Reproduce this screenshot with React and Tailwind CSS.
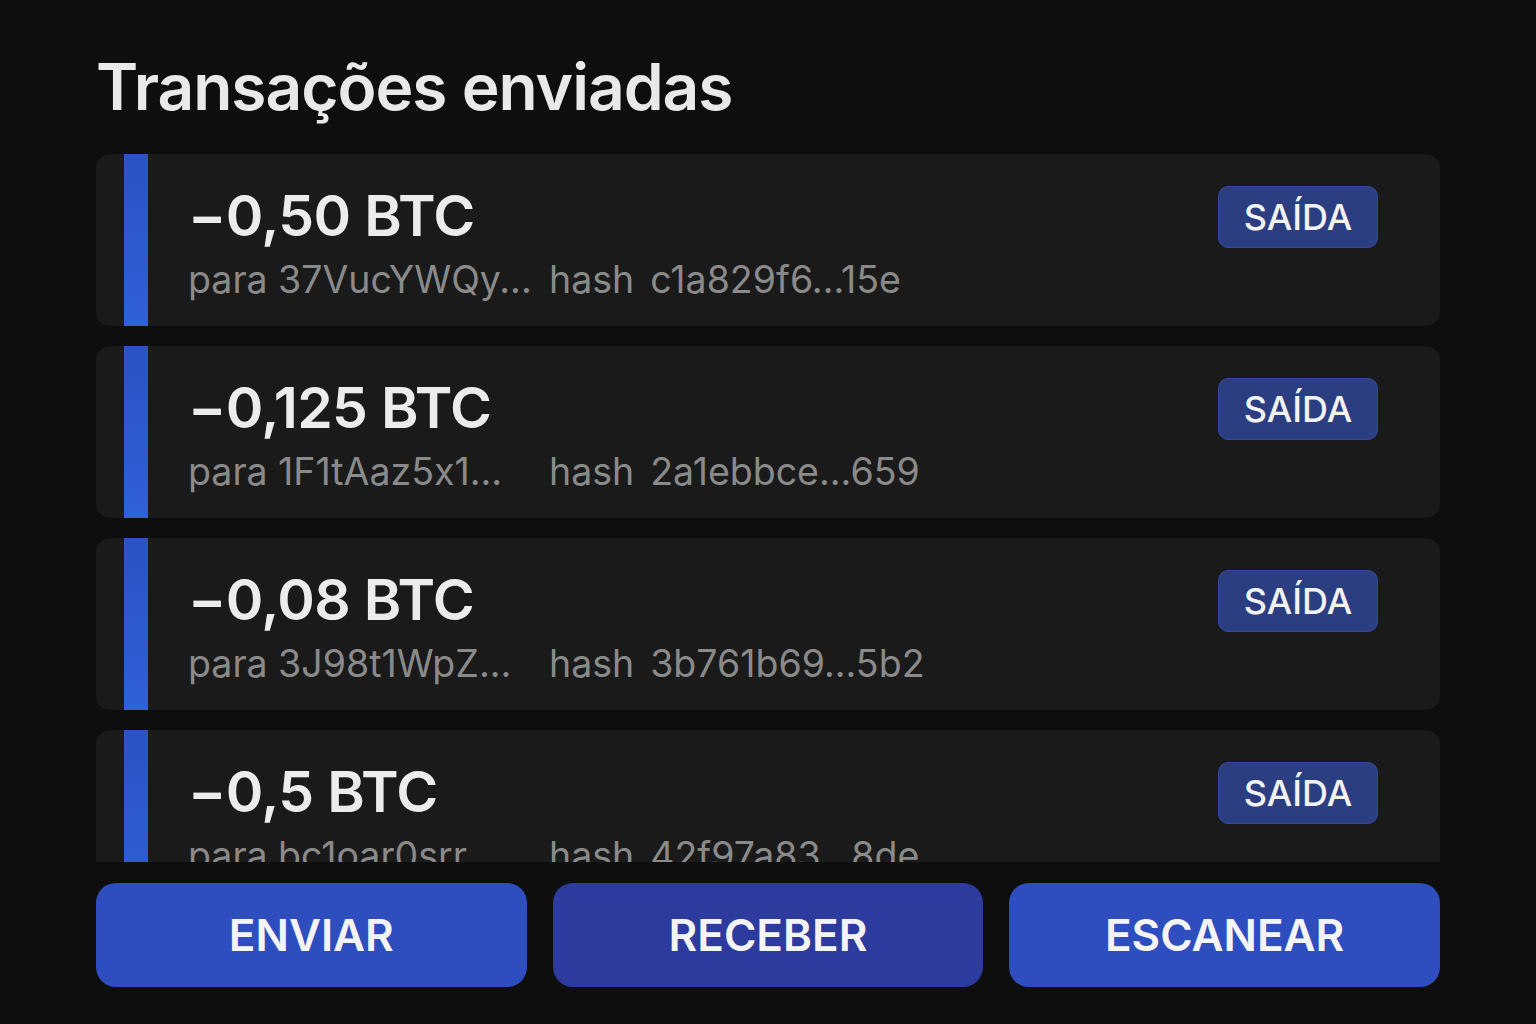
import React from "react";

const txs = [
  { amt: "−0,50 BTC", to: "para 37VucYWQy...", hash: "c1a829f6...15e" },
  { amt: "−0,125 BTC", to: "para 1F1tAaz5x1...", hash: "2a1ebbce...659" },
  { amt: "−0,08 BTC", to: "para 3J98t1WpZ...", hash: "3b761b69...5b2" },
  { amt: "−0,5 BTC", to: "para bc1oar0srr...", hash: "42f97a83...8de" },
];

function Row({ tx }) {
  return (
    <div className="flex h-[172px] shrink-0 rounded-[14px] bg-[#1a1a1a] pl-[28px] pr-[62px]">
      <div className="w-[24px] shrink-0 bg-gradient-to-b from-[#2c52c4] to-[#3160d8]" />
      <div className="flex flex-1 flex-col pl-[40px] pt-[33px]">
        <div className="text-[57px] font-semibold leading-none tracking-[-0.6px] text-[#ececec]">
          {tx.amt}
        </div>
        <div className="mt-[17px] flex text-[37.5px] leading-none text-[#8a8a8a] whitespace-nowrap">
          <span className="w-[361px] shrink-0">{tx.to}</span>
          <span>hash</span>
          <span className="ml-[16px]">{tx.hash}</span>
        </div>
      </div>
      <div className="pt-[32px]">
        <div className="flex h-[62px] w-[160px] items-center justify-center rounded-[10px] border border-[#34489a] bg-[#2b3e82] text-[36px] font-medium leading-none text-[#f2f2f2]">
          SAÍDA
        </div>
      </div>
    </div>
  );
}

export default function App() {
  return (
    <div
      className="h-[1024px] w-[1536px] overflow-hidden bg-[#0e0e0e] px-[96px] pt-[55px] [font-feature-settings:'calt'_0]"
      style={{ fontFamily: "Inter, 'Noto Sans', sans-serif" }}
    >
      <h1 className="text-[64px] font-semibold leading-none tracking-[-1px] text-[#e9e9e9]">
        Transações enviadas
      </h1>
      <div className="mt-[35px] flex h-[708px] flex-col gap-[20px] overflow-hidden">
        {txs.map((t) => (
          <Row key={t.hash} tx={t} />
        ))}
      </div>
      <div className="mt-[21px] grid grid-cols-3 gap-[26px]">
        <button className="flex h-[104px] items-center justify-center rounded-[20px] bg-[#2e4dbe] text-[44px] font-semibold leading-none text-[#f4f4f4]">
          ENVIAR
        </button>
        <button className="flex h-[104px] items-center justify-center rounded-[20px] bg-[#2d3b9f] text-[44px] font-semibold leading-none text-[#f4f4f4]">
          RECEBER
        </button>
        <button className="flex h-[104px] items-center justify-center rounded-[20px] bg-[#2e4dbe] text-[44px] font-semibold leading-none text-[#f4f4f4]">
          ESCANEAR
        </button>
      </div>
    </div>
  );
}
